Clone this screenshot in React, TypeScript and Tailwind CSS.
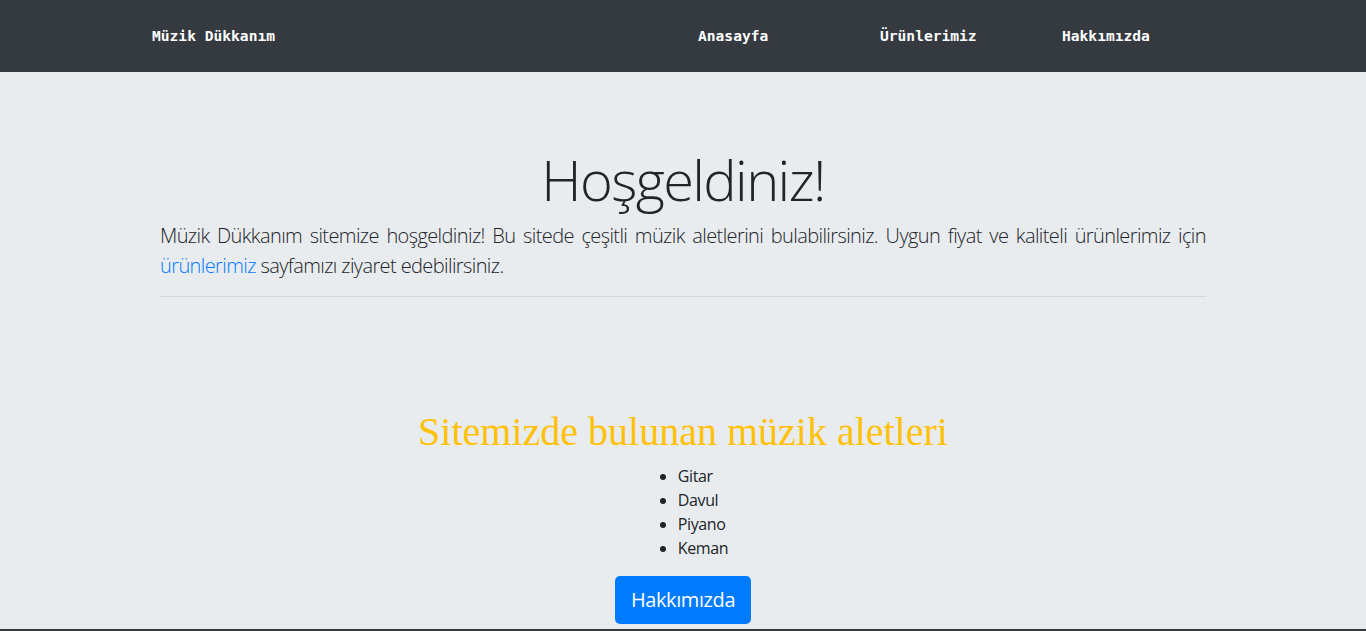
export default function App() {
  const links = ["Anasayfa", "Ürünlerimiz", "Hakkımızda"];
  const items = ["Gitar", "Davul", "Piyano", "Keman"];

  return (
    <div className="min-h-screen w-full bg-[#e9ecef] text-[#212529] font-['Open_Sans',sans-serif]">
      <nav className="h-[72px] bg-[#343a40] flex items-center font-['DejaVu_Sans_Mono',monospace] text-[14.6px] font-bold text-white">
        <span className="pl-[152px] w-[698px]">Müzik Dükkanım</span>
        {links.map((l) => (
          <a key={l} href="#" className="w-[182px]">
            {l}
          </a>
        ))}
      </nav>

      <section className="px-[160px] pt-[74px]">
        <h1 className="text-center text-[56px] font-light leading-[1.2] tracking-[-1.6px] mb-2">Hoşgeldiniz!</h1>
        <p className="text-[20px] font-light leading-[30px] tracking-[-0.6px] text-justify">
          Müzik Dükkanım sitemize hoşgeldiniz! Bu sitede çeşitli müzik aletlerini bulabilirsiniz. Uygun fiyat ve
          kaliteli ürünlerimiz için{" "}
          <a href="#" className="text-[#007bff]">
            ürünlerimiz
          </a>{" "}
          sayfamızı ziyaret edebilirsiniz.
        </p>
        <hr className="mt-[15px] border-t border-[#d5d8db]" />
      </section>

      <section className="mt-[111px] text-center">
        <h2 className="font-['Liberation_Serif',serif] text-[40px] leading-[48px] text-[#ffc107] mb-2">
          Sitemizde bulunan müzik aletleri
        </h2>
        <ul className="w-fit mx-auto pl-10 list-disc text-left text-base leading-6 tracking-[-0.4px]">
          {items.map((i) => (
            <li key={i}>{i}</li>
          ))}
        </ul>
        <button className="mt-4 h-12 px-4 rounded-[5px] bg-[#007bff] text-white text-[20px] leading-[30px] tracking-[-0.4px]">
          Hakkımızda
        </button>
      </section>

      <footer className="mt-[5px] h-10 bg-[#343a40]" />
    </div>
  );
}
